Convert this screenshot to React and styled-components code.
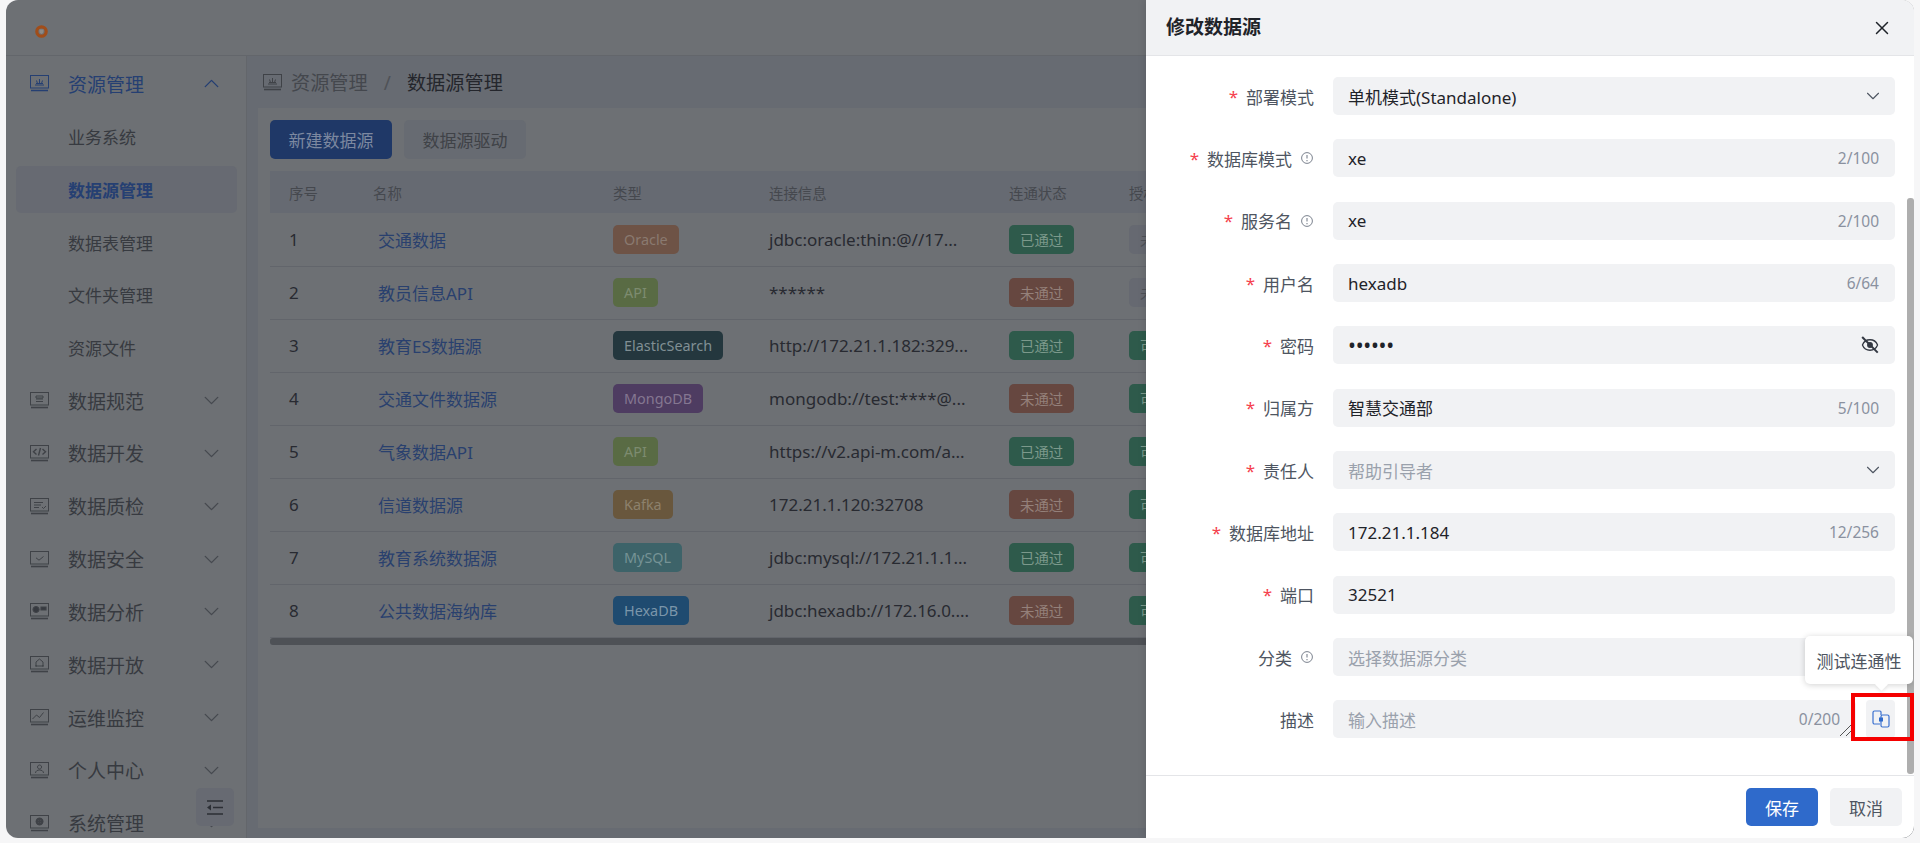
import React from 'react';
import styled, { createGlobalStyle } from 'styled-components';
import { ChevronDown, ChevronUp, X, Eye } from 'lucide-react';

const GlobalStyle = createGlobalStyle`
    html, body {
        margin: 0;
        padding: 0;
        height: 100%;
        background: #f6f6f7;
        overflow: hidden;
    }
    body, button, table {
        font-family: "Noto Sans", "Noto Sans CJK SC", sans-serif;
    }
    * {
        box-sizing: border-box;
    }
`;

const Frame = styled.div`
    position: relative;
    width: 1908px;
    height: 838px;
    margin-left: 6px;
    border-radius: 12px;
    overflow: hidden;
    display: flex;
    flex-direction: column;
    background: #6d7074;
`;

const TopBar = styled.header`
    height: 56px;
    flex: none;
    display: flex;
    align-items: center;
    padding: 8px 0 0 29px;
    border-bottom: 1px solid #63666b;
`;

const Body = styled.div`
    flex: 1;
    min-height: 0;
    display: flex;
`;

const Sidebar = styled.aside`
    position: relative;
    width: 241px;
    flex: none;
    padding: 4px 9px 0 10px;
    display: flex;
    flex-direction: column;
    gap: 5.850px;
    border-right: 1px solid #63666b;
    overflow: hidden;
`;

const MenuItem = styled.div`
    height: 47px;
    flex: none;
    display: flex;
    align-items: center;
    padding-left: ${(p) => (p.$sub ? '52px' : '14px')};
    padding-right: 13px;
    border-radius: 5px;
    font-size: ${(p) => (p.$sub ? '17px' : '19px')};
    font-weight: ${(p) => (p.$active ? 700 : 400)};
    color: ${(p) => (p.$blue ? '#253f72' : '#373a40')};
    background: ${(p) => (p.$active ? '#676a72' : 'transparent')};
`;

const MenuLabel = styled.span`
    flex: 1;
    margin-left: 19px;
`;

const SubLabel = styled.span`
    flex: 1;
`;

const MenuArrow = styled.span`
    display: flex;
    color: ${(p) => (p.$blue ? '#253f72' : '#46494f')};
`;

const CollapseButton = styled.div`
    position: absolute;
    left: 190px;
    top: 732px;
    width: 38px;
    height: 38px;
    border-radius: 5px;
    background: #676a72;
    display: flex;
    align-items: center;
    justify-content: center;
`;

const Main = styled.main`
    flex: 1;
    min-width: 0;
    display: flex;
    flex-direction: column;
    background: #676b72;
`;

const Crumbs = styled.div`
    height: 52px;
    flex: none;
    display: flex;
    align-items: center;
    padding-left: 16px;
    font-size: 19.200px;
    color: #44474d;
`;

const CrumbLabel = styled.span`
    margin-left: 9px;
`;

const CrumbSep = styled.span`
    margin: 0 16px;
    color: #4f5257;
`;

const CrumbCurrent = styled.span`
    color: #24262c;
`;

const Card = styled.section`
    flex: 1;
    margin: 0 0 10px 11px;
    padding: 12px 0 0 12px;
    background: #6d7074;
    overflow: hidden;
`;

const Toolbar = styled.div`
    display: flex;
    gap: 12px;
    margin-bottom: 12px;
`;

const Button = styled.button`
    width: ${(p) => p.$width || '122px'};
    height: ${(p) => p.$height || '39px'};
    border: none;
    border-radius: 5px;
    font-size: 17px;
    padding: 0;
    background: ${(p) => p.$bg};
    color: ${(p) => p.$color};
`;

const Table = styled.table`
    width: 1200px;
    table-layout: fixed;
    border-collapse: collapse;
`;

const HeadCell = styled.th`
    width: ${(p) => p.$width};
    height: 42px;
    padding: 0 0 0 19px;
    background: #666a72;
    font-size: 14.400px;
    font-weight: 400;
    text-align: left;
    color: #45484e;
    white-space: nowrap;
`;

const Row = styled.tr`
    border-bottom: 1px solid #62656b;
`;

const Cell = styled.td`
    height: 53px;
    padding: 0 0 0 19px;
    font-size: 17px;
    color: #282a31;
    white-space: nowrap;
`;

const NameLink = styled.span`
    margin-left: 5px;
    color: #29406e;
`;

const Tag = styled.span`
    display: inline-flex;
    align-items: center;
    height: 29px;
    padding: 0 11px;
    border-radius: 5px;
    font-size: 14.400px;
    background: ${(p) => p.$bg};
    color: ${(p) => p.$color};
`;

const TableScroll = styled.div`
    width: 1200px;
    height: 7px;
    background: #4e5156;
    border-radius: 3px;
`;

const Drawer = styled.aside`
    position: absolute;
    top: 0;
    right: 0;
    bottom: 0;
    width: 768px;
    display: flex;
    flex-direction: column;
    background: #fff;
    box-shadow: 0 0 8px rgba(0, 0, 0, 0.15);
`;

const DrawerHead = styled.div`
    height: 56px;
    flex: none;
    display: flex;
    align-items: center;
    justify-content: space-between;
    padding: 0 21px 0 20px;
    background: #f1f2f4;
    border-bottom: 1px solid #e4e5e8;
`;

const DrawerTitle = styled.h2`
    margin: 0 0 3px;
    font-size: 19px;
    font-weight: 700;
    color: #1f2329;
`;

const CloseIcon = styled(X)`
    color: #1f2329;
    margin-top: 1px;
`;

const Form = styled.div`
    position: relative;
    flex: 1;
    min-height: 0;
    padding: 21px 19px 0 0;
    display: flex;
    flex-direction: column;
    gap: 24.350px;
`;

const FormRow = styled.div`
    display: grid;
    grid-template-columns: 168px 1fr;
    column-gap: 19px;
    align-items: center;
`;

const Label = styled.label`
    display: flex;
    align-items: center;
    justify-content: flex-end;
    font-size: 17px;
    color: #4e5561;
`;

const Star = styled.span`
    color: #f5414e;
    margin-right: 8px;
`;

const InfoMark = styled.svg`
    margin-left: 9px;
    margin-right: 1px;
    flex: none;
`;

const Field = styled.div`
    position: relative;
    flex: 1;
    height: 38px;
    display: flex;
    align-items: center;
    justify-content: space-between;
    padding: 0 16px 0 15px;
    border-radius: 5px;
    background: #f1f2f4;
    font-size: 17px;
    color: ${(p) => (p.$placeholder ? '#9aa1ac' : '#1f2329')};
`;

const Dots = styled.span`
    font-size: 21px;
    letter-spacing: -0.270px;
`;

const Counter = styled.span`
    font-size: 15.500px;
    color: #8a919f;
`;

const FieldChevron = styled(ChevronDown)`
    color: #4e5561;
    margin-right: -5px;
`;

const FieldEye = styled.span`
    position: relative;
    display: flex;
    color: #333842;
    circle {
        fill: currentColor;
    }
    &::after {
        content: '';
        position: absolute;
        left: 8px;
        top: -2px;
        width: 1.600px;
        height: 22px;
        background: #333842;
        transform: rotate(-45deg);
    }
`;

const Resize = styled.svg`
    position: absolute;
    right: 3px;
    bottom: 1px;
`;

const TextAreaLine = styled.div`
    display: flex;
    gap: 10px;
`;

const TestButton = styled.div`
    position: relative;
    width: 29px;
    height: 38px;
    flex: none;
    border-radius: 4px;
    background: #f1f2f4;
    display: flex;
    align-items: center;
    justify-content: center;
`;

const RedBox = styled.div`
    position: absolute;
    left: -15px;
    top: -7px;
    width: 63px;
    height: 48px;
    border: 4px solid #f50000;
`;

const Tooltip = styled.div`
    position: absolute;
    right: -18px;
    bottom: 54px;
    width: 108px;
    height: 48px;
    border-radius: 5px;
    background: #fff;
    box-shadow: 0 1px 6px rgba(0, 0, 0, 0.18);
    display: flex;
    align-items: center;
    justify-content: center;
    font-size: 17px;
    color: #4e5561;
    white-space: nowrap;
    &::after {
        content: '';
        position: absolute;
        left: 72px;
        bottom: -5px;
        width: 9px;
        height: 9px;
        background: #fff;
        transform: rotate(45deg);
        box-shadow: 2px 2px 3px rgba(0, 0, 0, 0.06);
    }
`;

const ScrollThumb = styled.div`
    position: absolute;
    right: 0;
    top: 142px;
    bottom: 1px;
    width: 7px;
    border-radius: 3px;
    background: #aeaeae;
`;

const DrawerFoot = styled.div`
    height: 63px;
    flex: none;
    display: flex;
    justify-content: flex-end;
    gap: 12px;
    padding: 12px 12px 0 0;
    border-top: 1px solid #e4e5e8;
`;

const MenuFrame = ({ children, color }) => (
    <svg width="19" height="17" viewBox="0 0 19 17" fill="none" stroke={color} strokeWidth="1">
        <rect x="0.5" y="0.5" width="18" height="12.5" />
        <path d="M1 15.5h17" strokeWidth="1.6" />
        {children}
    </svg>
);

const glyphs = {
    crown: <path d="M5 10h9M6 8.5h7M9.5 4v4M6.5 5.5l1 3M12.5 5.5l-1 3" />,
    stack: <path d="M6 4h7v2H6zM6 7h7M6 9.5h7" />,
    code: <path d="M6.5 4L3.5 6.8l3 2.7M12.5 4l3 2.8-3 2.7M10.500 3l-2 7.500" strokeWidth="1.4" />,
    list: <path d="M4 4.500h9M4 7h7M4 9.500h5M12 9l1.500 1.500L16 8" />,
    check: <path d="M6 6.800l3 2.400 4.500-3.700" />,
    pie: <path d="M6 3.500a3 3 0 1 0 .1 0zM11 4h5v3h-5z" fill="currentColor" strokeWidth="1.2" />,
    nodes: <path d="M9.500 3l-3.500 3v4h7V6zM5 10h2M12 10h2" />,
    chart: <path d="M2.500 10l4-4 3 2.500 4-5" />,
    user: <path d="M9.500 3a2 2 0 1 0 .1 0zM5.500 11c0-4 8-4 8 0" />,
    gear: <path d="M9.500 3.500a3 3 0 1 0 .1 0zM6 6.500h7M9.500 3v7" strokeWidth="2" />,
};

const menus = [
    { name: '资源管理', icon: 'crown', open: true },
    { name: '业务系统', sub: true },
    { name: '数据源管理', sub: true, active: true },
    { name: '数据表管理', sub: true },
    { name: '文件夹管理', sub: true },
    { name: '资源文件', sub: true },
    { name: '数据规范', icon: 'stack' },
    { name: '数据开发', icon: 'code' },
    { name: '数据质检', icon: 'list' },
    { name: '数据安全', icon: 'check' },
    { name: '数据分析', icon: 'pie' },
    { name: '数据开放', icon: 'nodes' },
    { name: '运维监控', icon: 'chart' },
    { name: '个人中心', icon: 'user' },
    { name: '系统管理', icon: 'gear' },
];

const tagColors = {
    Oracle: ['#6e5346', '#8a7a70'],
    API: ['#596b44', '#7d8b70'],
    ElasticSearch: ['#24373e', '#808f94'],
    MongoDB: ['#4e3c61', '#857791'],
    Kafka: ['#69573d', '#8d816c'],
    MySQL: ['#3d6369', '#769396'],
    HexaDB: ['#1f4b70', '#7b96aa'],
};

const rows = [
    ['交通数据', 'Oracle', 'jdbc:oracle:thin:@//17...', true, false],
    ['教员信息API', 'API', '******', false, false],
    ['教育ES数据源', 'ElasticSearch', 'http://172.21.1.182:329...', true, true],
    ['交通文件数据源', 'MongoDB', 'mongodb://test:****@...', false, true],
    ['气象数据API', 'API', 'https://v2.api-m.com/a...', true, true],
    ['信道数据源', 'Kafka', '172.21.1.120:32708', false, true],
    ['教育系统数据源', 'MySQL', 'jdbc:mysql://172.21.1.1...', true, true],
    ['公共数据海纳库', 'HexaDB', 'jdbc:hexadb://172.16.0....', false, true],
];

const fields = [
    { label: '部署模式', required: true, value: '单机模式(Standalone)', end: 'select' },
    { label: '数据库模式', required: true, info: true, value: 'xe', end: '2/100' },
    { label: '服务名', required: true, info: true, value: 'xe', end: '2/100' },
    { label: '用户名', required: true, value: 'hexadb', end: '6/64' },
    { label: '密码', required: true, value: '••••••', end: 'eye' },
    { label: '归属方', required: true, value: '智慧交通部', end: '5/100' },
    { label: '责任人', required: true, value: '帮助引导者', placeholder: true, end: 'select' },
    { label: '数据库地址', required: true, value: '172.21.1.184', end: '12/256' },
    { label: '端口', required: true, value: '32521' },
    { label: '分类', info: true, value: '选择数据源分类', placeholder: true, end: 'select' },
];

function FieldEnd({ end }) {
    if (end === 'select') return <FieldChevron size={22} strokeWidth={1.2} />;
    if (end === 'eye') {
        return (
            <FieldEye>
                <Eye size={18} strokeWidth={1.8} />
            </FieldEye>
        );
    }
    return end ? <Counter>{end}</Counter> : null;
}

export default function App() {
    return (
        <Frame>
            <GlobalStyle />
            <TopBar>
                <svg width="13" height="13" viewBox="0 0 13 13">
                    <circle cx="6.5" cy="6.5" r="4.700" fill="none" stroke="#a04d1a" strokeWidth="3.200" />
                    <path d="M4.500 4.500h4v2.200c0 1-.9 1.700-2 2.200-1.100-.5-2-1.200-2-2.200z" fill="#8d8a86" />
                </svg>
            </TopBar>
            <Body>
                <Sidebar>
                    {menus.map((m) => {
                        const blue = m.open || m.active;
                        return (
                            <MenuItem key={m.name} $sub={m.sub} $active={m.active} $blue={blue}>
                                {m.sub ? (
                                    <SubLabel>{m.name}</SubLabel>
                                ) : (
                                    <>
                                        <MenuFrame color={blue ? '#253f72' : '#3f4247'}>{glyphs[m.icon]}</MenuFrame>
                                        <MenuLabel>{m.name}</MenuLabel>
                                        <MenuArrow $blue={blue}>
                                            {m.open ? <ChevronUp size={25} strokeWidth={1.3} /> : <ChevronDown size={25} strokeWidth={1.3} />}
                                        </MenuArrow>
                                    </>
                                )}
                            </MenuItem>
                        );
                    })}
                    <CollapseButton>
                        <svg width="18" height="15" viewBox="0 0 18 15" fill="none" stroke="#2c2f35" strokeWidth="1.5">
                            <path d="M1 1h16M7 7.500h10M1 14h16" />
                            <path d="M5 4.500v6L1 7.500z" fill="#2c2f35" stroke="none" />
                        </svg>
                    </CollapseButton>
                </Sidebar>
                <Main>
                    <Crumbs>
                        <MenuFrame color="#3f4247">{glyphs.crown}</MenuFrame>
                        <CrumbLabel>资源管理</CrumbLabel>
                        <CrumbSep>/</CrumbSep>
                        <CrumbCurrent>数据源管理</CrumbCurrent>
                    </Crumbs>
                    <Card>
                        <Toolbar>
                            <Button $bg="#1f3867" $color="#7c88a0">新建数据源</Button>
                            <Button $bg="#676b72" $color="#3f4247">数据源驱动</Button>
                        </Toolbar>
                        <Table>
                            <thead>
                                <tr>
                                    <HeadCell $width="84px">序号</HeadCell>
                                    <HeadCell $width="240px">名称</HeadCell>
                                    <HeadCell $width="156px">类型</HeadCell>
                                    <HeadCell $width="240px">连接信息</HeadCell>
                                    <HeadCell $width="120px">连通状态</HeadCell>
                                    <HeadCell>授权状态</HeadCell>
                                </tr>
                            </thead>
                            <tbody>
                                {rows.map(([name, type, conn, passed, usable], i) => (
                                    <Row key={name}>
                                        <Cell>{i + 1}</Cell>
                                        <Cell><NameLink>{name}</NameLink></Cell>
                                        <Cell><Tag $bg={tagColors[type][0]} $color={tagColors[type][1]}>{type}</Tag></Cell>
                                        <Cell>{conn}</Cell>
                                        <Cell>
                                            {passed
                                                ? <Tag $bg="#2e5a4b" $color="#7c998b">已通过</Tag>
                                                : <Tag $bg="#664740" $color="#94807a">未通过</Tag>}
                                        </Cell>
                                        <Cell>
                                            {usable
                                                ? <Tag $bg="#2e5a4b" $color="#7c998b">可使用</Tag>
                                                : <Tag $bg="#666971" $color="#4f5258">未授权</Tag>}
                                        </Cell>
                                    </Row>
                                ))}
                            </tbody>
                        </Table>
                        <TableScroll />
                    </Card>
                </Main>
            </Body>

            <Drawer>
                <DrawerHead>
                    <DrawerTitle>修改数据源</DrawerTitle>
                    <CloseIcon size={22} strokeWidth={1.6} />
                </DrawerHead>
                <Form>
                    <ScrollThumb />
                    {fields.map((f) => (
                        <FormRow key={f.label}>
                            <Label>
                                {f.required && <Star>*</Star>}
                                {f.label}
                                {f.info && (
                                    <InfoMark width="12" height="12" viewBox="0 0 12 12" fill="none" stroke="#7b828e">
                                        <circle cx="6" cy="6" r="5.400" />
                                        <path d="M6 3v3.600M6 8v1.200" strokeWidth="1.100" />
                                    </InfoMark>
                                )}
                            </Label>
                            <Field $placeholder={f.placeholder}>
                                {f.end === 'eye' ? <Dots>{f.value}</Dots> : <span>{f.value}</span>}
                                <FieldEnd end={f.end} />
                            </Field>
                        </FormRow>
                    ))}
                    <FormRow>
                        <Label>描述</Label>
                        <TextAreaLine>
                            <Field $placeholder>
                                <span>输入描述</span>
                                <Counter>0/200</Counter>
                                <Resize width="14" height="13" viewBox="0 0 14 13" fill="none" stroke="#555">
                                    <path d="M1 12L12 1M7 12l6-6" />
                                </Resize>
                            </Field>
                            <TestButton>
                                <svg width="18" height="18" viewBox="0 0 18 18" fill="none" stroke="#3a70cf" strokeWidth="1.200">
                                    <path d="M8 14H2.500A1.500 1.500 0 0 1 1 12.500V2.500A1.500 1.500 0 0 1 2.500 1H8a1 1 0 0 1 1 1v3" />
                                    <rect x="9" y="5" width="8" height="12" rx="1.500" />
                                    <rect x="7" y="7.500" width="4" height="4" fill="#2f6acb" stroke="none" />
                                </svg>
                                <Tooltip>测试连通性</Tooltip>
                                <RedBox />
                            </TestButton>
                        </TextAreaLine>
                    </FormRow>
                </Form>
                <DrawerFoot>
                    <Button $width="72px" $height="38px" $bg="#2f6acb" $color="#fff">保存</Button>
                    <Button $width="72px" $height="38px" $bg="#f1f2f4" $color="#4e5561">取消</Button>
                </DrawerFoot>
            </Drawer>
        </Frame>
    );
}
